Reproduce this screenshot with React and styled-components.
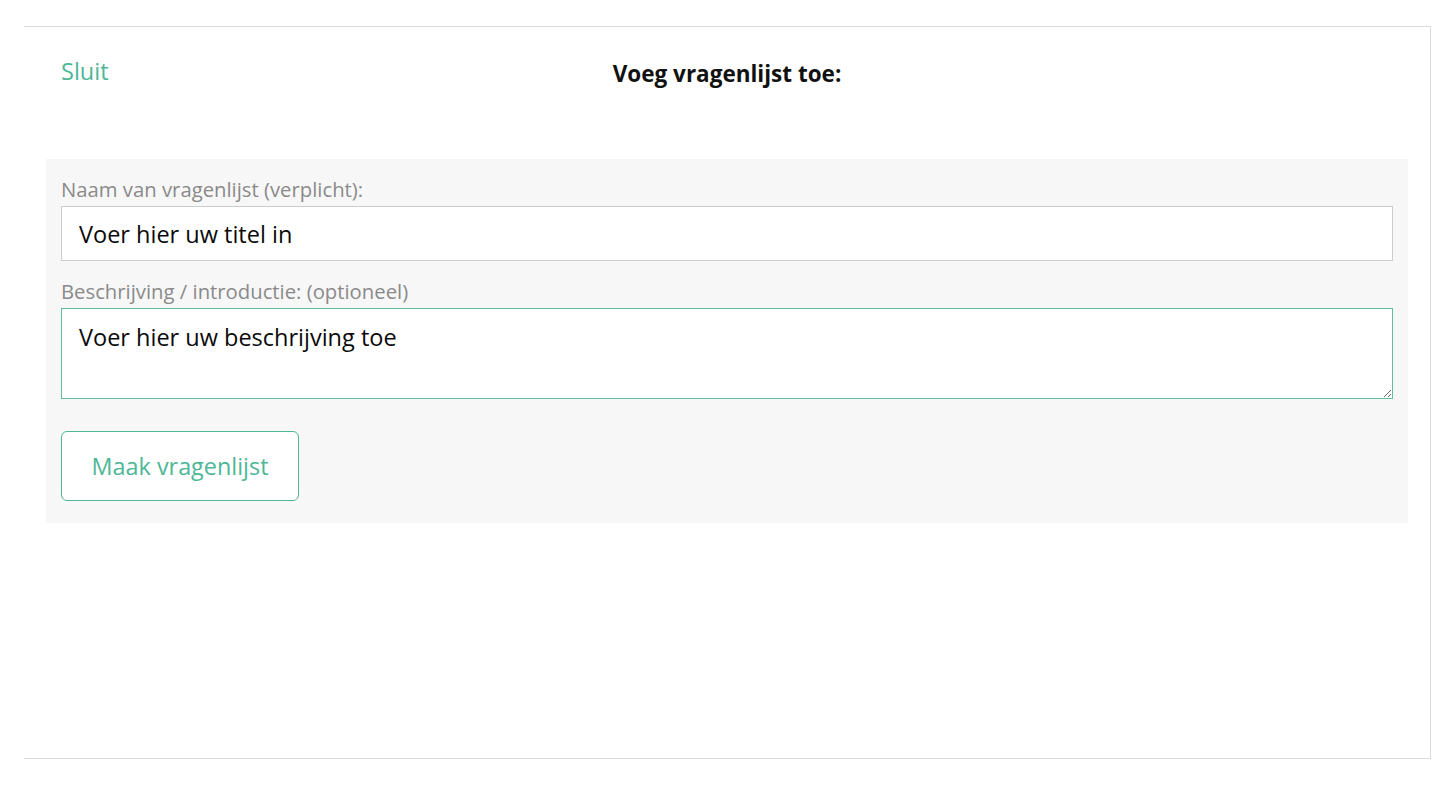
import React, { useState } from "react"
import styled, { createGlobalStyle } from "styled-components"

const GlobalStyle = createGlobalStyle`
  body {
    margin: 0;
    background: #ffffff;
    font-family: "Open Sans", "Noto Sans", sans-serif;
  }
`

const Page = styled.div`
  padding: 26px 25px 26px 24px;
`

const Card = styled.div`
  height: 733px;
  box-sizing: border-box;
  border: 1px solid #dcdcdc;
  border-left: none;
  background: #fff;
  padding: 0 22px 0 22px;
`

const Header = styled.div`
  display: grid;
  grid-template-columns: 1fr auto 1fr;
  align-items: center;
  height: 90px;
  padding: 0 15px;
`

const CloseLink = styled.a`
  justify-self: start;
  color: #4db796;
  font-size: 23.5px;
  text-decoration: none;
  cursor: pointer;
  margin-top: -2px;
`

const Title = styled.h2`
  margin: 0;
  font-size: 22.5px;
  font-weight: 700;
  color: #111;
  margin-top: 2px;
`

const Panel = styled.form`
  margin-top: 42px;
  background: #f7f7f7;
  padding: 18px 15px 22px 15px;
`

const Label = styled.label`
  display: block;
  color: #8a8a8a;
  font-size: 20.3px;
  line-height: 24px;
  margin-bottom: 5px;
`

const Field = styled.div`
  margin-bottom: ${p => p.$gap || 0}px;
`

const TextInput = styled.input`
  display: block;
  width: 100%;
  box-sizing: border-box;
  height: 55px;
  border: 1px solid #cccccc;
  background: #fff;
  padding: 0 17px;
  font-family: inherit;
  font-size: 23.5px;
  color: #0a0a0a;
  outline: none;
  &::placeholder {
    color: #0a0a0a;
  }
`

const TextArea = styled.textarea`
  display: block;
  width: 100%;
  box-sizing: border-box;
  height: 91px;
  border: 1px solid #5dbf9f;
  background: #fff;
  padding: 12px 17px;
  font-family: inherit;
  font-size: 23.5px;
  color: #0a0a0a;
  outline: none;
  resize: vertical;
  &::placeholder {
    color: #0a0a0a;
  }
`

const Button = styled.button`
  display: block;
  margin-top: 32px;
  width: 238px;
  height: 70px;
  border: 1px solid #4db796;
  border-radius: 6px;
  background: #fff;
  color: #4db796;
  font-family: inherit;
  font-size: 23.4px;
  cursor: pointer;
`

export default function App() {
  const [name, setName] = useState("")
  const [desc, setDesc] = useState("")

  return (
    <Page>
      <GlobalStyle />
      <Card>
        <Header>
          <CloseLink>Sluit</CloseLink>
          <Title>Voeg vragenlijst toe:</Title>
          <span />
        </Header>
        <Panel onSubmit={e => e.preventDefault()}>
          <Field $gap={18}>
            <Label>Naam van vragenlijst (verplicht):</Label>
            <TextInput
              value={name}
              onChange={e => setName(e.target.value)}
              placeholder="Voer hier uw titel in"
            />
          </Field>
          <Field>
            <Label>Beschrijving / introductie: (optioneel)</Label>
            <TextArea
              value={desc}
              onChange={e => setDesc(e.target.value)}
              placeholder="Voer hier uw beschrijving toe"
            />
          </Field>
          <Button type="submit">Maak vragenlijst</Button>
        </Panel>
      </Card>
    </Page>
  )
}
